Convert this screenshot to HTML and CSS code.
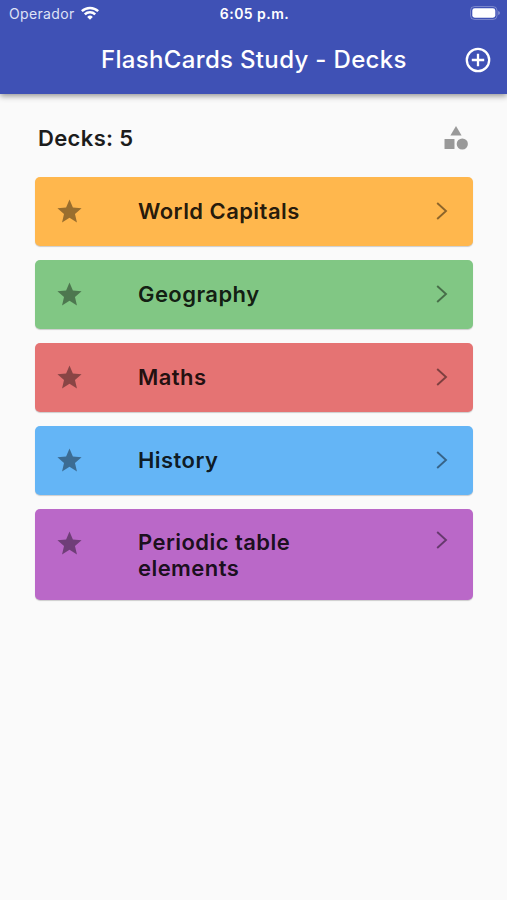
FILE: index.html
```html
<!DOCTYPE html>
<html lang="en">
<head>
<meta charset="utf-8">
<title>FlashCards Study</title>
<link rel="stylesheet" href="styles.css">
</head>
<body>
<svg class="defs" aria-hidden="true">
  <symbol id="star" viewBox="0 0 24 24"><path d="M12 17.27 18.18 21l-1.64-7.03L22 9.24l-7.19-.61L12 2 9.19 8.63 2 9.24l5.46 4.73L5.82 21z"/></symbol>
  <symbol id="chevron" viewBox="0 0 12 18"><path d="M1.2 1 10 9 1.2 17" fill="none" stroke="currentColor" stroke-width="1.9"/></symbol>
</svg>
<header class="top">
  <div class="status">
    <div class="carrier"><span>Operador</span>
      <svg class="wifi" viewBox="0 0 18 14"><g fill="none" stroke="#fff" stroke-width="2.5"><path d="M.8 5.2a11.8 11.8 0 0 1 16.4 0"/><path d="M3.8 8.4a7.5 7.5 0 0 1 10.4 0"/></g><path fill="#fff" d="M9 13.8 6.2 10.9a4 4 0 0 1 5.6 0z"/></svg>
    </div>
    <div class="time">6:05 p.m.</div>
    <svg class="battery" viewBox="0 0 30 14"><rect x=".5" y=".5" width="26.5" height="13" rx="4" fill="none" stroke="#fff" stroke-opacity=".3"/><rect x="2.3" y="2.3" width="23" height="9.4" rx="2.4" fill="#fff"/><path d="M28.3 5v4q1.5-.6 1.5-2t-1.5-2" fill="#fff" fill-opacity=".45"/></svg>
  </div>
  <div class="bar">
    <h1>FlashCards Study - Decks</h1>
    <svg class="add" viewBox="0 0 26 26" fill="none" stroke="#fff" stroke-width="2.3"><circle cx="13" cy="13" r="11.2"/><path d="M13 6.8v12.4M6.8 13h12.4"/></svg>
  </div>
</header>
<main>
  <div class="summary">
    <h2>Decks: 5</h2>
    <svg class="shapes" viewBox="0 0 24 24"><path d="M12 0 17.6 9.5H6.4z"/><rect x=".5" y="13" width="10" height="10" rx=".5"/><circle cx="18.3" cy="18" r="5.6"/></svg>
  </div>
  <ul class="decks">
    <li class="deck orange"><svg class="star"><use href="#star"/></svg><span>World Capitals</span><svg class="chevron"><use href="#chevron"/></svg></li>
    <li class="deck green"><svg class="star"><use href="#star"/></svg><span>Geography</span><svg class="chevron"><use href="#chevron"/></svg></li>
    <li class="deck red"><svg class="star"><use href="#star"/></svg><span>Maths</span><svg class="chevron"><use href="#chevron"/></svg></li>
    <li class="deck blue"><svg class="star"><use href="#star"/></svg><span>History</span><svg class="chevron"><use href="#chevron"/></svg></li>
    <li class="deck purple tall"><svg class="star"><use href="#star"/></svg><span>Periodic table elements</span><svg class="chevron"><use href="#chevron"/></svg></li>
  </ul>
</main>
</body>
</html>
```
FILE: styles.css
```css
* { box-sizing: border-box; }
body { margin: 0; min-height: 900px; background: #fafafa; color: #1c1c1c; font-family: Inter, "Liberation Sans", sans-serif; }
svg { display: block; flex: none; }
.defs { display: none; }
h1, h2 { margin: 0; white-space: nowrap; }
.top { height: 94px; background: #3f51b5; color: #fff; box-shadow: 0 2px 6px rgba(0,0,0,.42); }
.status { height: 26px; display: grid; grid-template-columns: 1fr auto 1fr; align-items: center; padding: 0 7px 0 9px; }
.carrier { display: flex; align-items: center; gap: 6px; font-size: 14px; letter-spacing: .35px; color: #dfe3f6; }
.wifi { width: 18px; height: 14px; }
.time { font-size: 14px; font-weight: 600; letter-spacing: .45px; }
.battery { width: 30px; height: 14px; justify-self: end; }
.bar { height: 67px; display: flex; align-items: center; justify-content: space-between; padding: 0 16px 0 101px; }
h1 { font-size: 24px; font-weight: 500; line-height: 30px; letter-spacing: .33px; }
.add { width: 26px; height: 26px; }
main { padding: 30px 34px 0 35px; }
.summary { height: 27px; display: flex; align-items: center; justify-content: space-between; padding: 0 5px 0 3px; }
h2 { font-size: 22px; font-weight: 600; line-height: 26px; letter-spacing: .35px; }
.shapes { width: 24px; height: 24px; fill: #999; }
.decks { list-style: none; margin: 26px 0 0; padding: 0; display: flex; flex-direction: column; gap: 14.5px; }
.deck { height: 68.5px; display: flex; align-items: flex-start; padding: 21px 25px 0 20px; border-radius: 5px; box-shadow: 0 1px 1px rgba(0,0,0,.18); }
.tall { height: 91px; }
.deck span { width: 200px; margin-left: 54px; font-size: 22px; font-weight: 600; line-height: 26px; letter-spacing: .44px; color: rgba(0,0,0,.87); }
.star { width: 29px; height: 29px; margin-top: -1px; fill: rgba(0,0,0,.4); }
.chevron { width: 12px; height: 18px; margin: 4px 0 0 auto; color: rgba(0,0,0,.45); }
.tall .chevron { margin-top: 1px; }
.tall span { margin-top: -1px; }
.orange { background: #ffb74d; }
.green { background: #81c784; }
.red { background: #e57373; }
.blue { background: #64b5f6; }
.purple { background: #ba68c8; }
```
